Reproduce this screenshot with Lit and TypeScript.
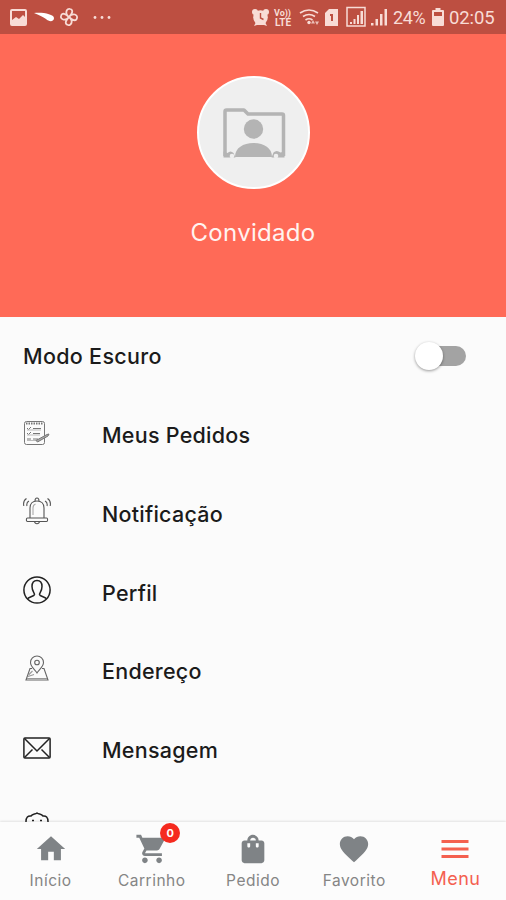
import { LitElement, html, svg, css } from "lit";
import { customElement, property } from "lit/decorators.js";

const rowIcons: Record<string, unknown> = {
  orders: svg`<g fill="none" stroke="#777" stroke-width="1">
    <rect x="1.5" y="2.500" width="20" height="23" rx="2"/><path d="M3 4.500h17" stroke-dasharray="1.500 1" stroke-width="2.200"/>
    <path d="M4 9l1.500 1.500L8 8M10 9.500h8M4 14l1.500 1.500L8 13M10 14.500h7M4 20h4M10 20h5" />
    <path d="M4 11h14M4 16h13M4 21.500h9" stroke="#bbb"/>
    <path d="M13 21.500l11-6 2-.5-1 2-10.500 6z" fill="#aaa"/></g>`,
  bell: svg`<g fill="none" stroke="#555" stroke-width="1.100">
    <path d="M7 21V11c0-4 2.500-7 7-7s7 3 7 7v10M4.500 21h19c1.500 0 1.500 3.500 0 3.500h-19c-1.500 0-1.500-3.500 0-3.500zM12 4c0-4 4-4 4 0M11.500 24.500c.5 3 4.500 3 5 0"/>
    <path d="M10 18v-7c0-2 1-3.500 2.500-4" stroke="#aaa"/>
    <path d="M3.500 1.500C1 3 .2 6 .8 9M6 4C4 5 3.500 7 4 9M24.500 1.500c2.500 1.500 3.300 4.500 2.700 7.500M22 4c2 1 2.500 3 2 5"/></g>`,
  profile: svg`<g fill="none" stroke="#222" stroke-width="1.500"><circle cx="14" cy="14" r="13.100"/>
    <path d="M4.500 23c1-2 6.500-2.500 7-4.500.3-1.500-2.500-3-2.500-8 0-4 2-6 5-6s5 2 5 6c0 5-2.800 6.500-2.500 8 .5 2 6 2.500 7 4.500"/></g>`,
  address: svg`<g fill="none" stroke="#666" stroke-width="1.100">
    <path d="M14 18c-2-3-6.500-6.500-6.500-10.500a6.500 6.500 0 0 1 13 0C20.500 11.500 16 15 14 18z"/><circle cx="14" cy="7.500" r="2.300"/>
    <path d="M9 13.500H7L3 25h22l-4-11.500h-2"/><path d="M4 23.500h20M5.500 20l4-4M5 21.500l6-2" stroke="#999"/></g>`,
  mail: svg`<g fill="none" stroke="#222" stroke-width="1.500"><rect x=".9" y="3.900" width="26.200" height="20" rx="1"/>
    <path d="M1.500 4.500L14 17 26.500 4.500M1.500 23.500l8-8M26.500 23.500l-8-8"/></g>`,
  about: svg`<path d="M3 11c0-4 2-6 5-5.500 1.500-2.500 4-1.500 6-3 2 1.500 4.500.5 6 3 3-.5 5 1.500 5 5.500v10H3zM9 10h2M17 10h2" transform="translate(0 -1.500)" fill="none" stroke="#222" stroke-width="1.500"/>`,
};

const navIcons: Record<string, string> = {
  home: "M10 20v-6h4v6h5v-8h3L12 3 2 12h3v8z",
  cart: "M7 18c-1.100 0-1.990.9-1.990 2S5.900 22 7 22s2-.9 2-2-.9-2-2-2zM1 2v2h2l3.600 7.590-1.350 2.450c-.16.280-.25.610-.25.960 0 1.100.9 2 2 2h12v-2H7.420c-.14 0-.25-.11-.25-.25l.03-.12.900-1.630h7.450c.75 0 1.410-.41 1.750-1.030l3.580-6.490A1 1 0 0 0 20 4H5.210l-.94-2H1zm16 16c-1.100 0-1.990.9-1.990 2s.89 2 1.990 2 2-.9 2-2-.9-2-2-2z",
  bag: "M18 6h-2c0-2.210-1.790-4-4-4S8 3.790 8 6H6c-1.100 0-2 .9-2 2v12c0 1.100.9 2 2 2h12c1.100 0 2-.9 2-2V8c0-1.100-.9-2-2-2zm-8 4c0 .55-.45 1-1 1s-1-.45-1-1V8h2v2zm2-6c1.100 0 2 .9 2 2h-4c0-1.100.9-2 2-2zm4 6c0 .55-.45 1-1 1s-1-.45-1-1V8h2v2z",
  heart: "M12 21.350l-1.450-1.320C5.400 15.360 2 12.280 2 8.500 2 5.420 4.420 3 7.500 3c1.740 0 3.410.81 4.500 2.090C13.090 3.810 14.760 3 16.500 3 19.580 3 22 5.420 22 8.500c0 3.780-3.400 6.860-8.550 11.540L12 21.350z",
  menu: "M3 18h18v-2H3v2zm0-5h18v-2H3v2zm0-7v2h18V6H3z",
};

@customElement("status-bar")
class StatusBar extends LitElement {
  static styles = css`
    :host { display: block; height: 34px; background: #bd4f41; color: #f8dcd6; }
    .bar { display: flex; align-items: center; height: 34px; }
    svg { display: block; flex: none; fill: currentColor; }
    .left { flex: none; width: 251px; }
    .text { font: 400 18.500px/34px Roboto, "Liberation Sans", sans-serif; white-space: nowrap; padding-top: 2px; }
    .percent { width: 34px; margin-left: 5px; font-size: 18px; letter-spacing: -.4px; }
    .battery { margin-left: 4px; }
    .clock { margin-left: 4px; letter-spacing: -.1px; }
  `;
  render() {
    return html`<div class="bar">
      <svg class="left" height="34" viewBox="0 0 251 34">
        <path fill-rule="evenodd" d="M12 9h13a2 2 0 0 1 2 2v13a2 2 0 0 1-2 2H12a2 2 0 0 1-2-2V11a2 2 0 0 1 2-2zm0 2v9l4-3 3 2 4-4 2 2v-6z"/>
        <path d="M34 13c8-1 20 1 20 5 0 4-5 4-8 1-3-2-7-4-12-6z" fill="#fff"/>
        <g fill="none" stroke="currentColor" stroke-width="1.800"><path d="M69 17c-5-4-2-9 1-8 4 1 2 5-1 8zM69 17c4-5 9-2 8 1-1 4-5 2-8-1zM69 17c5 4 2 9-1 8-4-1-2-5 1-8zM69 17c-4 5-9 2-8-1 1-4 5-2 8 1z"/></g>
        <circle cx="95" cy="17.500" r="1.400"/><circle cx="102" cy="17.500" r="1.400"/><circle cx="109" cy="17.500" r="1.400"/>
      </svg>
      <svg width="137" height="34" viewBox="251 0 137 34">
        <circle cx="260.500" cy="17.500" r="7.300"/><circle cx="255" cy="12" r="3"/><circle cx="266" cy="12" r="3"/><path d="M254 26l2-4h9l2 4-3-1h-7z"/>
        <path d="M260.500 13v5l3 1.500" fill="none" stroke="#bd4f41" stroke-width="1.400"/>
        <g font-family="Roboto, sans-serif" font-weight="700"><text x="274" y="16" font-size="9" textLength="17">Vo))</text><text x="275" y="26" font-size="10" textLength="16">LTE</text></g>
        <g fill="none" stroke="currentColor" stroke-width="1.700"><path d="M300 13q9-6 18 0M303 16.500q6-4 12 0M305.500 20q3.500-2.500 7 0"/></g>
        <circle cx="309" cy="22.500" r="1.700"/><path d="M312 20l2 3.500h-4zM316 25l-2-3.500h4z" transform="translate(1 0)" opacity=".8"/>
        <path fill-rule="evenodd" d="M329 9h9v17h-13V13zM330 14v2h1v5h2v-7z"/>
        <rect x="347" y="7.500" width="18" height="18.500" fill="none" stroke="currentColor" stroke-width="1.500"/>
        <path d="M350 22h2v2h-2zM353.500 19h2v5h-2zM357 15h2v9h-2zM360.500 11h2.500v13h-2.500zM371 23h2.500v2.500H371zM375.500 19h2.500v6.500h-2.500zM380 14h2.500v11.500H380zM384.500 9h2.500v16.500h-2.500z"/>
      </svg>
      <span class="text percent">24%</span>
      <svg class="battery" width="14" height="34" viewBox="0 0 14 34"><path fill-rule="evenodd" d="M4.500 8h5v2H12q1 0 1 1v14q0 1-1 1H2q-1 0-1-1V11q0-1 1-1h2.500zM3 12v4h8v-4z"/></svg>
      <span class="text clock">02:05</span>
    </div>`;
  }
}

@customElement("menu-row")
class MenuRow extends LitElement {
  @property() icon = "";
  @property() label = "";
  static styles = css`
    :host { display: block; flex: none; }
    .row { display: flex; align-items: center; height: 78.750px; padding: 0 23px; box-sizing: border-box; }
    .icon { flex: none; width: 28px; height: 28px; margin: -5px 51px 0 0; display: block; }
    .label { font: 550 21.500px/30px Inter, Roboto, sans-serif; letter-spacing: .25px; padding-top: var(--label-drop, 0); color: #1b1b1b; white-space: nowrap; }
  `;
  render() {
    return html`<div class="row">
      <svg class="icon" viewBox="0 0 28 28">${rowIcons[this.icon]}</svg>
      <span class="label">${this.label}</span>
    </div>`;
  }
}

@customElement("nav-item")
class NavItem extends LitElement {
  @property() icon = "";
  @property() label = "";
  @property() badge = "";
  @property({ type: Boolean }) active = false;
  static styles = css`
    :host { display: block; flex: 1 1 0; min-width: 0; }
    .item { display: flex; flex-direction: column; align-items: center; padding-top: 10px; color: #7f8386; position: relative; }
    svg { display: block; width: 34px; height: 34px; fill: currentColor; }
    .label { font: 400 15.500px/22px Inter, Roboto, sans-serif; letter-spacing: .5px; margin-top: 4px; white-space: nowrap; color: #858585; }
    .active { color: #f4604f; padding-top: 9px; }
    .active svg { width: 36px; height: 36px; }
    .active .label { font-size: 18px; color: #f4604f; margin-top: 1px; letter-spacing: .4px; }
    .badge { position: absolute; left: 59px; top: 1px; width: 20px; height: 20px; border-radius: 50%; background: #f52a1f; color: #fff;
      font: 700 11px/20px Inter, Roboto, sans-serif; text-align: center; }
  `;
  render() {
    return html`<div class="item ${this.active ? "active" : ""}">
      <svg viewBox="0 0 24 24"><path d=${navIcons[this.icon]}></path></svg>
      <span class="label">${this.label}</span>
      ${this.badge ? html`<span class="badge">${this.badge}</span>` : ""}
    </div>`;
  }
}

@customElement("app-root")
class AppRoot extends LitElement {
  static styles = css`
    :host { display: flex; flex-direction: column; width: 506px; height: 900px; overflow: hidden; background: #fbfbfb; }
    .header { flex: none; height: 283px; box-sizing: border-box; padding-top: 42px; background: #ff6a57; display: flex; flex-direction: column; align-items: center; }
    .avatar { width: 113px; height: 113px; box-sizing: border-box; border: 2px solid #fff; border-radius: 50%; background: #efefef; display: grid; place-items: center; }
    .avatar svg { display: block; margin: 1px 0 0 1px; }
    .name { margin-top: 28px; font: 400 24px/32px Inter, Roboto, sans-serif; letter-spacing: .3px; color: #fff3f0; }
    .list { flex: 1 1 0; min-height: 0; overflow: hidden; display: flex; flex-direction: column; }
    .mode { flex: none; height: 78.750px; box-sizing: border-box; padding: 0 40px 0 23px; display: flex; align-items: center; justify-content: space-between;
      font: 550 21.500px/30px Inter, Roboto, sans-serif; letter-spacing: .3px; color: #1b1b1b; }
    .last { --label-drop: 2px; }
    .switch { width: 51px; height: 28px; display: flex; align-items: center; }
    .thumb { flex: none; width: 28px; height: 28px; border-radius: 50%; background: #fff; box-shadow: 0 1px 3px rgba(0,0,0,.4); z-index: 1; }
    .track { width: 37px; height: 20px; margin-left: -14px; border-radius: 0 10px 10px 0; background: #a3a3a3; }
    .nav { flex: none; height: 78px; display: flex; box-sizing: border-box; background: #fcfcfc; box-shadow: 0 -1px 2px rgba(0,0,0,.1); z-index: 2; }
  `;
  render() {
    return html`
      <status-bar></status-bar>
      <div class="header">
        <div class="avatar"><svg width="64" height="52" viewBox="0 0 64 52">
          <path d="M3 49V4.500Q3 3 4.500 3H22l4 4h34q1.500 0 1.500 1.500V49" fill="none" stroke="#b4b4b4" stroke-width="3.500" stroke-linejoin="round"/>
          <circle cx="31.500" cy="22" r="9.700" fill="#b4b4b4"/>
          <path d="M13 50c0-9 8-14 18.500-14S50 41 50 50z" fill="#b4b4b4"/>
          <path d="M1.500 50.500v-6l4 1.500q3-3 6 0l2 4.500zM62.500 50.500v-6l-4 1q-4-3-7 0l-2 5z" fill="#b4b4b4"/>
          <circle cx="10" cy="49" r="2.300" fill="#efefef"/><circle cx="54" cy="49" r="2.300" fill="#efefef"/>
        </svg></div>
        <div class="name">Convidado</div>
      </div>
      <div class="list">
        <div class="mode"><span>Modo Escuro</span><span class="switch"><span class="thumb"></span><span class="track"></span></span></div>
        <menu-row icon="orders" label="Meus Pedidos"></menu-row>
        <menu-row icon="bell" label="Notificação"></menu-row>
        <menu-row icon="profile" label="Perfil"></menu-row>
        <menu-row icon="address" label="Endereço"></menu-row>
        <menu-row icon="mail" label="Mensagem"></menu-row>
        <menu-row class="last" icon="about" label="Sobre"></menu-row>
      </div>
      <div class="nav">
        <nav-item icon="home" label="Início"></nav-item>
        <nav-item icon="cart" label="Carrinho" badge="0"></nav-item>
        <nav-item icon="bag" label="Pedido"></nav-item>
        <nav-item icon="heart" label="Favorito"></nav-item>
        <nav-item icon="menu" label="Menu" active></nav-item>
      </div>`;
  }
}
